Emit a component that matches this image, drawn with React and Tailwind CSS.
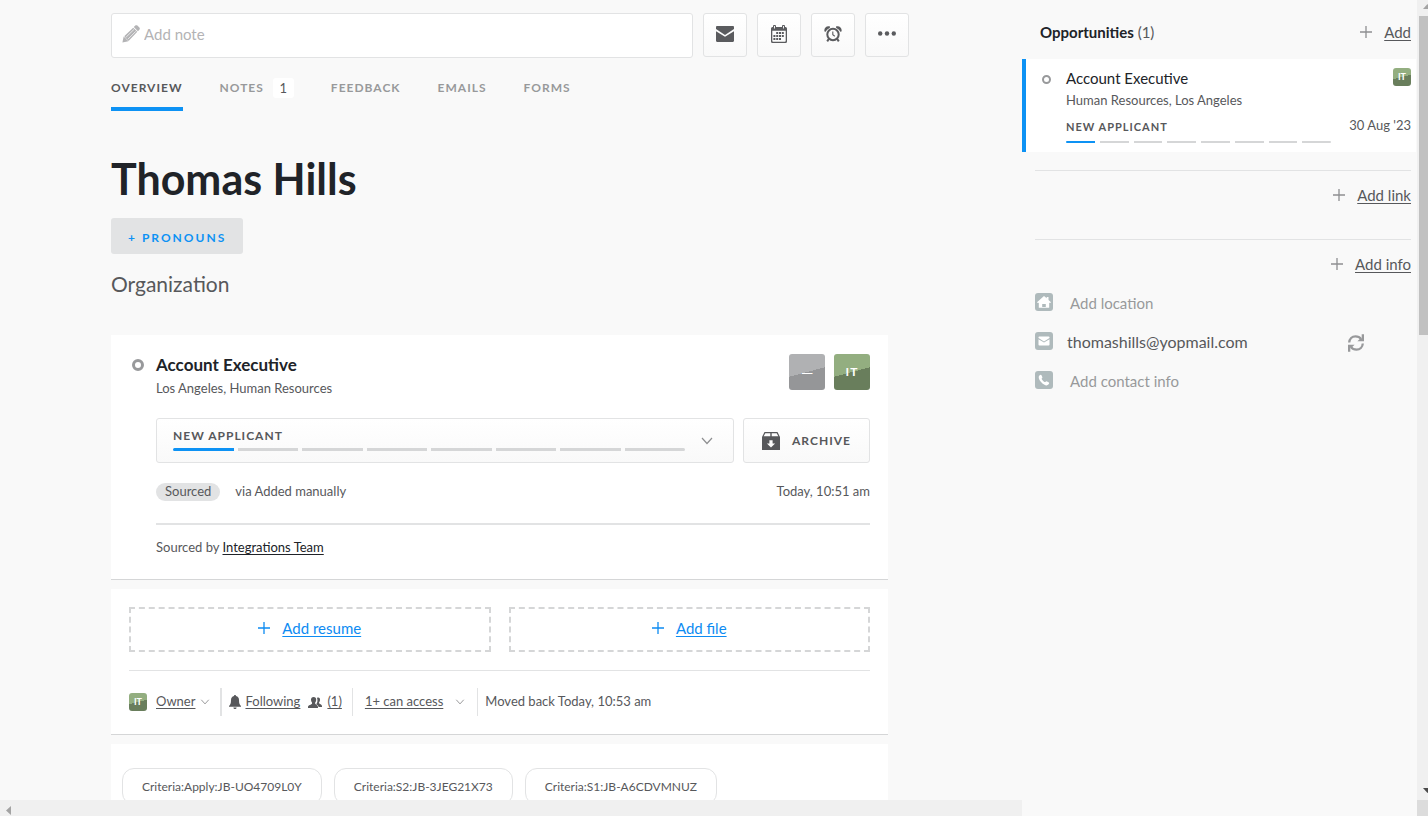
import clsx from 'clsx';

const tabs = [
  { label: 'Overview', active: true },
  { label: 'Notes', count: 1 },
  { label: 'Feedback' },
  { label: 'Emails' },
  { label: 'Forms' },
];

const criteria = ['Criteria:Apply:JB-UO4709L0Y', 'Criteria:S2:JB-3JEG21X73', 'Criteria:S1:JB-A6CDVMNUZ'];

const PlusIcon = ({ className }) => (
  <svg className={clsx('w-3 h-3 shrink-0', className)} viewBox="0 0 12 12" fill="none" stroke="currentColor">
    <path d="M6 0v12M0 6h12" strokeWidth="1.3" />
  </svg>
);

const ChevronIcon = ({ className }) => (
  <svg className={clsx('shrink-0 text-[#8e8f91]', className)} viewBox="0 0 12 8" fill="none" stroke="currentColor">
    <path d="M1 1l5 5.5L11 1" strokeWidth="1.2" />
  </svg>
);

const PencilIcon = () => (
  <svg className="w-[18px] h-[18px] shrink-0 text-[#b3b3b5]" viewBox="0 0 18 18" fill="currentColor">
    <path d="M11.8 2.1L13.3.6c.6-.6 1.5-.6 2.1 0l2 2c.6.6.6 1.500 0 2.100L15.900 6.200z" />
    <path d="M1.700 11.600L.4 17.600l6-1.300z" />
    <path d="M2.200 11.200L11.200 2.700l4.100 4.100L6.800 15.800l-1.300-.3-.4-1.500-1.600-.4-.3-1.600z" />
    <path d="M4.200 12l7.800-7.600M6.100 14l7.700-7.700" stroke="#fff" strokeWidth=".7" />
  </svg>
);

const MailIcon = () => (
  <svg className="w-[18px] h-4" viewBox="0 0 18 16" fill="currentColor">
    <path d="M1.200 0h15.600C17.500 0 18 .5 18 1.200V3L9 9 0 3V1.200C0 .5.500 0 1.200 0z" />
    <path d="M0 5.200l9 5.600 9-5.600v9.600c0 .7-.5 1.200-1.200 1.200H1.200C.5 16 0 15.500 0 14.800z" />
  </svg>
);

const CalendarIcon = () => (
  <svg className="w-4 h-[18px]" viewBox="0 0 16 18" fill="currentColor">
    <path fillRule="evenodd" d="M1.500 2H2V1a1 1 0 0 1 1-1h1a1 1 0 0 1 1 1v1h6V1a1 1 0 0 1 1-1h1a1 1 0 0 1 1 1v1h.5A1.500 1.500 0 0 1 16 3.500v13a1.500 1.500 0 0 1-1.500 1.500h-13A1.500 1.500 0 0 1 0 16.500v-13A1.500 1.500 0 0 1 1.500 2zM1.300 5.700v10.200c0 .5.3.8.8.8h11.800c.5 0 .8-.3.8-.8V5.700z" />
    <path d="M3.500 1v2.500M12.500 1v2.500" stroke="#fff" strokeWidth=".9" />
    <path d="M5.200 7h2v2h-2zM8 7h2v2H8zM10.800 7h2v2h-2zM2.400 10h2v2h-2zM5.200 10h2v2h-2zM8 10h2v2H8zM10.800 10h2v2h-2zM2.400 13h2v2h-2zM5.200 13h2v2h-2zM8 13h2v2H8z" />
  </svg>
);

const AlarmIcon = () => (
  <svg className="w-[18px] h-4" viewBox="0 0 18 16" fill="none" stroke="currentColor">
    <circle cx="9" cy="8.500" r="5.700" strokeWidth="2" />
    <path d="M8.800 5.500v3.200l2 1.500" strokeWidth="1.100" />
    <path d="M4.900 12.800l-1.700 2.600M13.100 12.800l1.700 2.600" strokeWidth="2" />
    <path d="M.5 5.500C-.4 2.300 2.600-.7 6 .6L5.800 2C3.900 2.800 2.600 4 1.700 5.700zM17.500 5.500C18.400 2.300 15.400-.7 12 .6l.2 1.400c1.900.8 3.200 2 4.100 3.700z" fill="currentColor" stroke="none" />
  </svg>
);

const MoreIcon = () => (
  <svg className="w-[18px] h-4" viewBox="0 0 18 16" fill="currentColor">
    <circle cx="2.200" cy="7.500" r="2.200" />
    <circle cx="9" cy="7.500" r="2.200" />
    <circle cx="15.800" cy="7.500" r="2.200" />
  </svg>
);

const ArchiveIcon = () => (
  <svg className="w-[18px] h-[18px]" viewBox="0 0 18 18" fill="currentColor">
    <path fillRule="evenodd" d="M2.500 0h13L18 5v13H0V5zM3.300 1.200L1.700 4.300h6.600V1.200zM9.700 1.200v3.100h6.600l-1.600-3.100zM7.400 8.200v3.200H4.900L9 15.600l4.100-4.200h-2.500V8.200z" />
  </svg>
);

const BellIcon = () => (
  <svg className="w-3 h-[14px] shrink-0" viewBox="0 0 12 14" fill="currentColor">
    <path d="M6 0c.6 0 1 .4 1 1 2 .5 3 2 3 4 0 3.300.6 4.800 2 6v.8H0V11c1.400-1.200 2-2.700 2-6 0-2 1-3.500 3-4 0-.6.400-1 1-1zM4.400 12.400h3.200C7.500 13.400 6.900 14 6 14s-1.500-.6-1.600-1.600z" />
  </svg>
);

const PeopleIcon = () => (
  <svg className="w-[14px] h-[11px] shrink-0" viewBox="0 0 14 11" fill="currentColor">
    <path d="M9 1C9.600.5 10.300.4 10.900.7c1 .3 1.300 1.300 1.100 2.500-.1.900-.5 1.600-.9 2.100v.9c.2.700 2.900 1.100 2.900 2.700V10h-3.400c-.2-1.700-1.300-2.200-2.500-2.800.6-.7 1.200-1.600 1.300-3C9.500 3 9.500 1.900 9 1z" />
    <path d="M5.600 0C7.300 0 8.400 1.100 8.200 3 8.100 4.200 7.700 5 7.200 5.600v1.100C7.500 7.600 10 8 10 10v1H0v-1c0-2 3.700-2.400 4-3.300V5.600C3.500 5 3.100 4.200 3 3 2.900 1.100 4 0 5.600 0z" />
  </svg>
);

const RefreshIcon = () => (
  <svg className="w-4 h-[18px]" viewBox="0 0 16 18" fill="none" stroke="currentColor" strokeWidth="2.300">
    <path d="M1.200 8.500C1.500 4.800 4 2.300 7.500 2.300c2.500 0 4.300.9 5.700 2.800M14.800 9.500c-.3 3.700-2.800 6.200-6.300 6.200-2.500 0-4.300-.9-5.700-2.800" />
    <path d="M16 .3v6.900H9.400l2.400-2.300h1.900V.3zM0 17.700v-6.900h6.600l-2.400 2.300H2.300v4.600z" fill="currentColor" stroke="none" />
  </svg>
);

const HomeGlyph = () => (
  <path fillRule="evenodd" d="M9 3l2.700 2.300V4h1.800v2.900L16 9.200l-.8.900-1-.4v5.100H3.800V9.700l-1 .4-.8-.9zM7.200 11v3h3.600v-3z" />
);

const EnvelopeGlyph = () => (
  <path d="M4.300 4.500h9.400c.5 0 .8.300.8.800v.8L9 9.400 3.500 6.100v-.8c0-.5.3-.8.8-.8zM3.500 7.300L9 10.600l5.500-3.300v5.400c0 .5-.3.800-.8.800H4.300c-.5 0-.8-.3-.8-.8z" />
);

const PhoneGlyph = () => (
  <path d="M5.800 3.800c.6 0 1.700 2.300 1.600 2.900-.1.500-.8.700-.8 1.100 0 .7 2.500 3.300 3.400 3.300.5 0 .8-.9 1.300-.9.700 0 2.900 1.300 2.900 1.900 0 1-1.300 2.300-2.600 2.300-3 0-7.900-4.600-7.900-8.100 0-1.200 1.200-2.500 2.100-2.500z" />
);

function Avatar({ small }) {
  return (
    <span
      className={clsx(
        'flex shrink-0 items-center justify-center rounded-[3px] bg-[linear-gradient(165deg,#93ae80_50%,#697e5c_50%)] font-bold text-white',
        small ? 'w-[18px] h-[18px] text-[9px]' : 'w-9 h-9 text-xs tracking-[1px]'
      )}
    >
      IT
    </span>
  );
}

function StageBars({ thin }) {
  return (
    <span className={clsx('flex w-full overflow-hidden rounded-sm', thin ? 'gap-[5px]' : 'gap-1')}>
      {Array.from({ length: 8 }, (_, i) => (
        <span key={i} className={clsx('flex-1', thin ? 'h-[2px]' : 'h-[3px]', i === 0 ? 'bg-[#0d92f4]' : 'bg-[#d5d6d7]')} />
      ))}
    </span>
  );
}

function ToolButton({ label, children }) {
  return (
    <button
      aria-label={label}
      className="flex h-11 w-11 shrink-0 items-center justify-center rounded-[3px] border border-[#e2e3e4] bg-linear-to-b from-white to-[#f9f9f9] pb-[2px] text-[#5a5b5e]"
    >
      {children}
    </button>
  );
}

function AddLink({ children }) {
  return (
    <a href="#" className="flex items-center justify-end gap-3 leading-6">
      <PlusIcon className="text-[#8e8f91]" />
      <span className="underline underline-offset-2">{children}</span>
    </a>
  );
}

function ContactRow({ glyph, children }) {
  return (
    <li className="flex h-[39px] items-start">
      <svg className="w-[18px] h-[18px] shrink-0" viewBox="0 0 18 18" fill="#fff">
        <rect width="18" height="18" rx="3" fill="#afbabc" />
        {glyph}
      </svg>
      {children}
    </li>
  );
}

function JobCard() {
  return (
    <section className="border-b border-[#d5d6d7] bg-white pt-[19px] pr-[18px] pb-[22px] pl-[45px]">
      <div className="flex h-9 justify-between">
        <div className="relative">
          <span className="absolute top-[5px] -left-6 h-3 w-3 rounded-full border-3 border-[#98999b]" />
          <h2 className="text-[17px] leading-[22px] font-bold text-[#202328]">Account Executive</h2>
          <p className="text-[13px] leading-6">Los Angeles, Human Resources</p>
        </div>
        <div className="flex gap-[9px]">
          <span className="flex h-9 w-9 items-center justify-center rounded-[3px] bg-[linear-gradient(165deg,#b0b1b3_50%,#959698_50%)] text-base text-white">
            —
          </span>
          <Avatar />
        </div>
      </div>

      <div className="mt-7 flex gap-[9px]">
        <button className="flex h-[45px] flex-1 items-center rounded-[3px] border border-[#e2e3e4] bg-linear-to-b from-white to-[#f9f9f9] pr-5 pl-4">
          <span className="flex flex-1 flex-col gap-1 pb-[2px] text-left">
            <span className="text-xs leading-4 font-bold tracking-[1px] uppercase">New applicant</span>
            <StageBars />
          </span>
          <ChevronIcon className="ml-4 h-2 w-3" />
        </button>
        <button className="flex h-[45px] w-[127px] items-center justify-center gap-3 rounded-[3px] border border-[#e2e3e4] bg-linear-to-b from-white to-[#f9f9f9] text-xs font-bold tracking-[1px] uppercase">
          <ArchiveIcon />
          Archive
        </button>
      </div>

      <div className="mt-5 flex h-[18px] items-center text-[13px]">
        <span className="h-[18px] rounded-full bg-[#e2e3e4] px-[9px] leading-4">Sourced</span>
        <span className="ml-[15px]">via Added manually</span>
        <span className="ml-auto">Today, 10:51 am</span>
      </div>

      <p className="mt-[22px] border-t-2 border-[#e2e3e4] pt-3 text-[13px] leading-5">
        Sourced by{' '}
        <a href="#" className="text-[#202328] underline underline-offset-2">
          Integrations Team
        </a>
      </p>
    </section>
  );
}

function FilesCard() {
  return (
    <section className="mt-[9px] border-b border-[#d5d6d7] bg-white p-[18px]">
      <div className="flex gap-[18px]">
        {['Add resume', 'Add file'].map((label) => (
          <button
            key={label}
            className="flex h-[45px] flex-1 items-center justify-center gap-3 border-2 border-dashed border-[#d5d6d7] pb-[3px] text-[#0d8bf2]"
          >
            <PlusIcon />
            <span className="underline underline-offset-2">{label}</span>
          </button>
        ))}
      </div>

      <div className="mt-[18px] border-t border-[#e2e3e4] pt-[17px]">
        <div className="flex h-7 items-center text-[13px]">
          <Avatar small />
          <button className="ml-[9px] flex items-center gap-[5px]">
            <span className="underline underline-offset-2">Owner</span>
            <ChevronIcon className="h-[6px] w-[10px]" />
          </button>
          <span className="mr-[7px] ml-[10px] h-7 w-[2px] bg-[#e2e3e4]" />
          <BellIcon />
          <a href="#" className="ml-1 underline underline-offset-2">Following</a>
          <span className="mr-[5px] ml-2">
            <PeopleIcon />
          </span>
          <a href="#" className="underline underline-offset-2">(1)</a>
          <span className="mr-3 ml-[10px] h-7 w-px bg-[#e2e3e4]" />
          <button className="flex items-center gap-3">
            <span className="underline underline-offset-2">1+ can access</span>
            <ChevronIcon className="h-[6px] w-[10px]" />
          </button>
          <span className="mr-[7px] ml-3 h-7 w-px bg-[#e2e3e4]" />
          <span>Moved back Today, 10:53 am</span>
        </div>
      </div>
    </section>
  );
}

function Sidebar() {
  return (
    <aside className="w-[395px] shrink-0 pr-[6px]">
      <div className="flex items-center justify-between pt-5 pl-[18px]">
        <h2 className="leading-6">
          <strong className="text-[#202328]">Opportunities</strong> (1)
        </h2>
        <AddLink>Add</AddLink>
      </div>

      <article className="mt-[15px] -mr-[5px] flex h-[93px] border-l-4 border-[#0d92f4] bg-white pt-2 pr-[5px] pl-4">
        <span className="mt-2 mr-[15px] h-[9px] w-[9px] shrink-0 rounded-full border-2 border-[#98999b]" />
        <div className="w-[265px]">
          <h3 className="leading-[23px] text-[#202328]">Account Executive</h3>
          <p className="text-[13px] leading-5">Human Resources, Los Angeles</p>
          <p className="mt-[9px] mb-[6px] text-[11px] leading-4 font-bold tracking-[1px] uppercase">New applicant</p>
          <StageBars thin />
        </div>
        <div className="flex flex-1 flex-col items-end pt-px">
          <Avatar small />
          <time className="mt-[29px] text-[13px] leading-5">30 Aug '23</time>
        </div>
      </article>

      <div className="mt-[18px] ml-[13px] h-[69px] border-t border-[#e2e3e4] pt-3">
        <AddLink>Add link</AddLink>
      </div>
      <div className="ml-[13px] border-t border-[#e2e3e4] pt-3">
        <AddLink>Add info</AddLink>
      </div>

      <ul className="mt-[17px] ml-[13px] leading-5">
        <ContactRow glyph={<HomeGlyph />}>
          <button className="ml-[17px] text-[#98999b]">Add location</button>
        </ContactRow>
        <ContactRow glyph={<EnvelopeGlyph />}>
          <span className="ml-[14px] text-base leading-5">thomashills@yopmail.com</span>
          <button aria-label="Refresh" className="mr-[47px] ml-auto pt-[2px] text-[#98999b]">
            <RefreshIcon />
          </button>
        </ContactRow>
        <ContactRow glyph={<PhoneGlyph />}>
          <button className="ml-[17px] text-[#98999b]">Add contact info</button>
        </ContactRow>
      </ul>
    </aside>
  );
}

export default function App() {
  return (
    <div className="flex h-screen overflow-hidden bg-[#f9f9f9] font-[Lato,sans-serif] text-[15px] text-[#57585b]">
      <main className="flex min-w-0 flex-1 flex-col">
        <div className="min-h-0 flex-1 overflow-hidden pt-[13px] pr-[134px] pl-[111px]">
          {/* Note box and quick actions */}
          <div className="-mr-[21px] flex gap-[10px]">
            <label className="flex h-[45px] flex-1 items-center gap-1 rounded-[3px] border border-[#e2e3e4] bg-white px-[10px] pb-[3px]">
              <PencilIcon />
              <input
                type="text"
                aria-label="Add note"
                placeholder="Add note"
                className="min-w-0 flex-1 outline-none placeholder:text-[#b3b3b5]"
              />
            </label>
            <ToolButton label="Email"><MailIcon /></ToolButton>
            <ToolButton label="Schedule"><CalendarIcon /></ToolButton>
            <ToolButton label="Snooze"><AlarmIcon /></ToolButton>
            <ToolButton label="More"><MoreIcon /></ToolButton>
          </div>

          {/* Tabs */}
          <nav className="mt-[18px] flex gap-[37px]">
            {tabs.map((tab) => (
              <a
                key={tab.label}
                href="#"
                className={clsx(
                  'flex h-[35px] items-start border-b-4 text-xs leading-6 font-bold tracking-[1px] uppercase',
                  tab.active ? 'border-[#0d92f4] text-[#57585b]' : 'border-transparent text-[#98999b]'
                )}
              >
                {tab.label}
                {tab.count && (
                  <span className="mt-[2px] ml-[9px] h-5 w-[21px] rounded-[3px] bg-white text-center text-[13px] leading-5 font-normal tracking-normal text-[#57585b]">
                    {tab.count}
                  </span>
                )}
              </a>
            ))}
          </nav>

          <h1 className="mt-[39px] text-[43px] leading-[58px] font-bold text-[#202328]">Thomas Hills</h1>
          <button className="mt-[10px] flex h-9 items-center rounded-[3px] bg-[#e2e3e4] px-[17px] pt-[3px] text-xs font-bold tracking-[2px] text-[#0d92f4] uppercase">
            + Pronouns
          </button>
          <p className="mt-[15px] mb-[37px] text-[21px] leading-[29px]">Organization</p>

          <JobCard />
          <FilesCard />

          <section className="mt-[9px] bg-white pt-6 pb-6 pl-[11px]">
            <ul className="flex gap-3 text-xs">
              {criteria.map((item) => (
                <li key={item} className="h-[37px] rounded-xl border border-[#e2e3e4] px-[19px] leading-[35px]">
                  {item}
                </li>
              ))}
            </ul>
          </section>
        </div>

        {/* Horizontal scroll track */}
        <div className="flex h-4 shrink-0 items-center justify-start bg-[#f0f0f0] pt-1 pl-[6px]">
          <svg className="h-[9px] w-[5px]" viewBox="0 0 5 9" fill="#a3a3a3">
            <path d="M5 0v9L0 4.500z" />
          </svg>
        </div>
      </main>

      <Sidebar />

      {/* Vertical scroll track */}
      <div className="flex w-[11px] shrink-0 flex-col overflow-hidden bg-[#f0f0f0] pl-[2px]">
        <div className="flex h-4 shrink-0 items-end pb-[7px] pl-1">
          <svg className="h-[5px] w-[9px] shrink-0" viewBox="0 0 9 5" fill="#a3a3a3">
            <path d="M0 5h9L4.500 0z" />
          </svg>
        </div>
        <div className="h-[319px] shrink-0 bg-[#c1c1c1]" />
        <div className="mt-auto flex h-[19px] shrink-0 items-center pl-1">
          <svg className="h-[5px] w-[9px] shrink-0" viewBox="0 0 9 5" fill="#4a4a4a">
            <path d="M0 0h9L4.500 5z" />
          </svg>
        </div>
        <div className="-ml-[2px] h-4 shrink-0 bg-[#dcdcdc]" />
      </div>
    </div>
  );
}
